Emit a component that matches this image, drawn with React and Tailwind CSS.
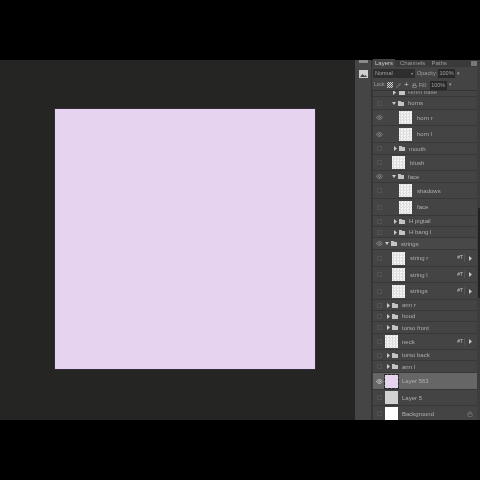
import { Eye, Lock, Pencil } from "lucide-react";

const rows = [
  { type: "clip", name: "Hmm base", indent: 7 },
  { type: "group", name: "horns", indent: 7, open: true, h: 13 },
  { type: "layer", name: "horn r", indent: 14, eye: true, h: 16, gap: 5 },
  { type: "layer", name: "horn l", indent: 14, eye: true, h: 17, gap: 5 },
  { type: "group", name: "mouth", indent: 8, h: 12 },
  { type: "layer", name: "blush", indent: 7, h: 16, gap: 5 },
  { type: "group", name: "face", indent: 7, open: true, eye: true, h: 12 },
  { type: "layer", name: "shadows", indent: 14, h: 16, gap: 5 },
  { type: "layer", name: "face", indent: 14, h: 17, gap: 5 },
  { type: "group", name: "H pigtail", indent: 8, h: 11 },
  { type: "group", name: "H bang l", indent: 8, h: 11 },
  { type: "group", name: "strings", indent: 0, open: true, eye: true, h: 12, light: true },
  { type: "layer", name: "string r", indent: 7, fx: true, h: 17, gap: 5 },
  { type: "layer", name: "string l", indent: 7, fx: true, h: 16, gap: 5 },
  { type: "layer", name: "strings", indent: 7, fx: true, h: 17, gap: 5 },
  { type: "group", name: "arm r", indent: 1, h: 11 },
  { type: "group", name: "hood", indent: 1, h: 11 },
  { type: "group", name: "torso front", indent: 1, h: 12 },
  { type: "layer", name: "neck", indent: 0, fx: true, h: 16, gap: 4 },
  { type: "group", name: "torso back", indent: 1, h: 11 },
  { type: "group", name: "arm l", indent: 1, h: 12 },
  { type: "layer", name: "Layer 563", indent: 0, eye: true, fill: "lilac", h: 17, active: true, gap: 4 },
  { type: "layer", name: "Layer 5", indent: 0, fill: "grey", h: 16, gap: 4 },
  { type: "layer", name: "Background", indent: 0, fill: "white", h: 16, lock: true, gap: 4 },
];

function Visibility({ eye, active }) {
  return (
    <div className="w-[12px] flex justify-center shrink-0">
      {eye ? (
        <Eye size={7} strokeWidth={2.5} className={active ? "text-[#d0d0d0]" : "text-[#8c8c8c]"} />
      ) : (
        <div className="w-[5px] h-[5px] border border-[#525252]" />
      )}
    </div>
  );
}

function Folder() {
  return (
    <svg width="6" height="5" viewBox="0 0 6 5" className="shrink-0">
      <path d="M0 0h2.5l1 1H6v4H0z" fill="#c4c4c4" />
    </svg>
  );
}

function Arrow({ open }) {
  return (
    <svg width="4" height="5" viewBox="0 0 4 5" className="shrink-0">
      {open ? <path d="M0 1h4L2 4z" fill="#c8c8c8" /> : <path d="M1 0l3 2.5L1 5z" fill="#c8c8c8" />}
    </svg>
  );
}

function Thumb({ fill }) {
  let cls = "bg-[repeating-conic-gradient(#dcdcdc_0_25%,#f6f6f6_0_50%)] bg-[length:3px_3px]";
  if (fill === "lilac") cls = "bg-[#e6d3f0] outline outline-1 outline-dashed outline-[#2a2a2a]";
  if (fill === "grey") cls = "bg-[#d2d2d2]";
  if (fill === "white") cls = "bg-white";
  return <div className={`w-[13px] h-[13px] shrink-0 ${cls}`} />;
}

function Row({ row }) {
  if (row.type === "clip") {
    return (
      <div className="h-[6px] flex items-end overflow-hidden border-b border-[#383838] shrink-0">
        <div className="flex items-center h-[12px] mb-[-2px] pl-[19px] gap-[3px] text-[#9a9a9a]">
          <Arrow />
          <Folder />
          <span>{row.name}</span>
        </div>
      </div>
    );
  }
  const bg = row.active ? "bg-[#666666]" : row.light ? "bg-[#484848]" : "bg-[#444444]";
  return (
    <div
      className={`flex items-center border-b border-[#383838] shrink-0 box-border ${bg}`}
      style={{ height: row.h }}
    >
      <Visibility eye={row.eye} active={row.active} />
      <div className="flex items-center min-w-0 flex-1" style={{ paddingLeft: row.indent }}>
        {row.type === "group" ? (
          <div className="flex items-center gap-[2px]">
            <Arrow open={row.open} />
            <Folder />
            <span className="text-[#aeaeae] ml-[2px] pt-[1px] whitespace-nowrap">{row.name}</span>
          </div>
        ) : (
          <div className="flex items-center" style={{ gap: row.gap }}>
            <Thumb fill={row.fill} />
            <span className="text-[#aeaeae] pt-[1px] whitespace-nowrap">{row.name}</span>
          </div>
        )}
      </div>
      {row.fx && (
        <div className="flex items-center gap-[3px] pr-[5px] text-[#c0c0c0]">
          <span className="text-[5px] border-r border-[#555] pr-[1px]">#T</span>
          <Arrow />
        </div>
      )}
      {row.lock && <Lock size={6} className="text-[#8a8a8a] mr-[4px]" />}
    </div>
  );
}

export default function App() {
  return (
    <div className="w-[480px] h-[480px] bg-black flex flex-col overflow-hidden font-['Liberation_Sans',sans-serif] text-[6px]">
      <div className="h-[60px] shrink-0" />
      <div className="h-[360px] flex">
        <div className="w-[355px] bg-[#252524] pl-[55px] pt-[49px]">
          <div className="w-[260px] h-[260px] bg-[#e6d3f0] shadow-[0_0_0_1px_#332c38]" />
        </div>

        <div className="w-[17px] bg-[#454545] flex flex-col items-center gap-[7px] border-r border-[#333] blur-[0.3px]">
          <div className="w-[9px] h-[3px] bg-[#8a8a8a]" />
          <svg width="9" height="8" viewBox="0 0 9 8">
            <rect width="9" height="8" fill="#cfcfcf" />
            <path d="M1 7l2.5-3 2 2 1-1L8 7z" fill="#444" />
          </svg>
        </div>

        <div className="w-[108px] flex blur-[0.3px]">
          <div className="w-[105px] flex flex-col">
            <div className="h-[7px] flex items-center bg-[#3a3a3a] text-[#9c9c9c] shrink-0 pl-[1px] relative">
              <span className="px-[2px] text-[#c8c8c8] bg-[#444]">Layers</span>
              <span className="ml-[5px]">Channels</span>
              <span className="ml-[6px]">Paths</span>
              <div className="absolute right-0 top-[1px] w-[6px] h-[5px] bg-[#777]" />
            </div>
            <div className="h-[13px] flex items-center bg-[#444] pl-[1px] text-[#a0a0a0] text-[5.5px] shrink-0">
              <div className="w-[42px] h-[9px] bg-[#2e2e2e] flex items-center justify-between px-[2px]">
                <span>Normal</span>
                <span className="text-[4px]">▾</span>
              </div>
              <span className="ml-[2px] w-[21px] whitespace-nowrap">Opacity:</span>
              <div className="bg-[#2a2a2a] w-[17px] justify-center h-[9px] flex items-center">100%</div>
              <span className="text-[5px] ml-[2px]">▾</span>
            </div>
            <div className="h-[11px] flex items-center bg-[#444] pl-[2px] text-[#a0a0a0] text-[5.5px] shrink-0 border-b border-[#333]">
              <span className="w-[13px] text-[5px]">Lock:</span>
              <div className="w-[6px] h-[6px] bg-[repeating-conic-gradient(#ccc_0_25%,#555_0_50%)] bg-[length:2px_2px]" />
              <Pencil size={5} className="ml-[3px]" />
              <span className="text-[8px] leading-none ml-[3px] text-[#ccc]">+</span>
              <Lock size={5} className="ml-[3px] text-[#ccc]" />
              <span className="ml-[2px] w-[11px]">Fill:</span>
              <div className="bg-[#2a2a2a] w-[17px] justify-center h-[9px] flex items-center">100%</div>
              <span className="text-[5px] ml-[2px]">▾</span>
            </div>
            <div className="flex-1 flex flex-col overflow-hidden bg-[#444] border-l border-[#383838]">
              {rows.map((row, i) => (
                <Row key={i} row={row} />
              ))}
            </div>
          </div>
          <div className="w-[3px] bg-[#3d3d3d] flex flex-col items-center pt-[148px]">
            <div className="w-[2px] h-[90px] bg-[#222]" />
          </div>
        </div>
      </div>
      <div className="h-[60px] shrink-0" />
    </div>
  );
}
